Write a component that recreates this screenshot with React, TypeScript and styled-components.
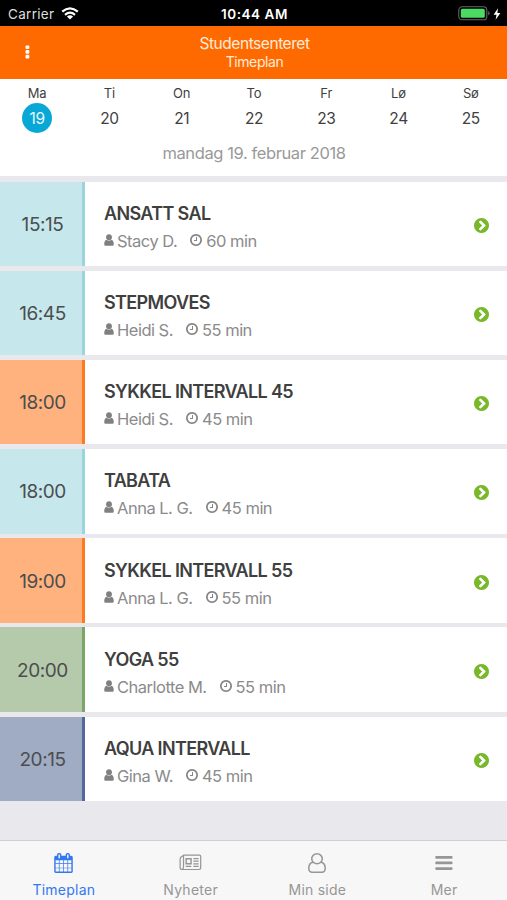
import React from 'react';
import styled, { createGlobalStyle } from 'styled-components';

const GlobalStyle = createGlobalStyle`
  * { box-sizing: border-box; }
  body {
    margin: 0;
    background: #e8e8ed;
    font-family: Inter, "Liberation Sans", sans-serif;
    color: #3f3f3f;
  }
`;

const Screen = styled.div`
  display: flex;
  flex-direction: column;
  width: 507px;
  height: 900px;
  overflow: hidden;
  background: #e8e8ed;
`;

const StatusBar = styled.div`
  display: grid;
  grid-template-columns: 1fr auto 1fr;
  align-items: center;
  flex: none;
  height: 25.5px;
  padding: 2px 6px 0 8px;
  background: #000;
  color: #fff;
`;

const Carrier = styled.div`
  display: flex;
  align-items: center;
  gap: 7px;
  font-size: 13.5px;
  letter-spacing: 0.3px;
  color: #dedede;
`;

const Clock = styled.div`
  font-size: 13.5px;
  font-weight: 600;
  letter-spacing: 0.55px;
`;

const Power = styled.div`
  display: flex;
  justify-content: flex-end;
  align-items: center;
  gap: 3px;
`;

const Header = styled.header`
  display: grid;
  grid-template-columns: 54px 1fr 54px;
  align-items: center;
  flex: none;
  height: 53.5px;
  background: #ff6a00;
  color: #ffeadb;
`;

const MenuButton = styled.button`
  display: flex;
  justify-content: center;
  padding: 0;
  border: 0;
  background: none;
`;

const Titles = styled.div`
  text-align: center;
  padding: 1px 0 0 2px;
`;

const Place = styled.div`
  font-size: 15.5px;
  line-height: 19px;
  letter-spacing: -0.45px;
`;

const Section = styled.div`
  font-size: 14px;
  line-height: 18px;
  letter-spacing: -0.4px;
`;

const Calendar = styled.section`
  flex: none;
  height: 97px;
  background: #fff;
`;

const Week = styled.div`
  display: grid;
  grid-template-columns: repeat(7, 1fr);
  padding: 6px 0 0 1px;
`;

const Day = styled.div`
  display: flex;
  flex-direction: column;
  align-items: center;
`;

const DayName = styled.div`
  font-size: 13px;
  line-height: 17px;
  letter-spacing: -0.1px;
`;

const DayNumber = styled.div<{ $active: boolean }>`
  width: 30px;
  height: 30px;
  margin-top: 1px;
  border-radius: 50%;
  font-size: 15.5px;
  line-height: 31px;
  letter-spacing: -0.4px;
  text-align: center;
  background: ${(p) => (p.$active ? '#07a7d6' : 'transparent')};
  color: ${(p) => (p.$active ? '#e6f8ff' : '#3f3f3f')};
`;

const FullDate = styled.div`
  margin-top: 9px;
  padding-left: 1px;
  text-align: center;
  font-size: 16.5px;
  line-height: 22px;
  letter-spacing: -0.4px;
  color: #999;
`;

const List = styled.main`
  display: flex;
  flex-direction: column;
  flex: 1;
  gap: 4.7px;
  padding-top: 5.5px;
`;

const Row = styled.article`
  display: flex;
  align-items: center;
  flex: none;
  height: 84.5px;
  padding-right: 18px;
  background: #fff;
`;

const Time = styled.div<{ $fill: string; $edge: string }>`
  display: flex;
  align-items: center;
  justify-content: center;
  align-self: stretch;
  width: 85px;
  padding: 1px 0 0 3px;
  border-right: 3px solid ${(p) => p.$edge};
  background: ${(p) => p.$fill};
  font-size: 19px;
  letter-spacing: -0.45px;
  color: #4b4e4f;
`;

const Details = styled.div`
  flex: 1;
  padding: 8px 0 0 19px;
`;

const Name = styled.div`
  font-size: 18px;
  font-weight: 600;
  line-height: 26px;
  letter-spacing: -0.65px;
  white-space: nowrap;
`;

const Meta = styled.div`
  display: flex;
  align-items: center;
  height: 28px;
  font-size: 16.5px;
  letter-spacing: -0.5px;
  color: #8b8b8b;
  white-space: nowrap;

  svg {
    margin-bottom: 2px;
  }
`;

const Trainer = styled.span`
  margin: 0 13px 0 3px;
`;

const Duration = styled.span`
  margin-left: 4px;
`;

const Arrow = styled.div`
  display: flex;
  padding-top: 3px;
`;

const TabBar = styled.nav`
  display: grid;
  grid-template-columns: repeat(4, 1fr);
  flex: none;
  height: 60px;
  border-top: 1px solid #cfcfd3;
  background: #f7f7f7;
`;

const Tab = styled.a<{ $active?: boolean }>`
  display: flex;
  flex-direction: column;
  align-items: center;
  color: ${(p) => (p.$active ? '#3478f0' : '#969696')};
`;

const TabIcon = styled.div`
  display: flex;
  align-items: center;
  height: 23px;
  margin-top: 10px;
`;

const TabLabel = styled.div`
  margin-top: 7px;
  padding-left: 1px;
  font-size: 14px;
  line-height: 18px;
  letter-spacing: 0.25px;
`;

const glyphs = {
  clock: 'M1024 544v448q0 14-9 23t-23 9h-320q-14 0-23-9t-9-23v-64q0-14 9-23t23-9h224v-352q0-14 9-23t23-9h64q14 0 23 9t9 23zm416 352q0-148-73-273t-198-198-273-73-273 73-198 198-73 273 73 273 198 198 273 73 273-73 198-198 73-273zm224 0q0 209-103 385.5t-279.5 279.5-385.5 103-385.5-103-279.5-279.5-103-385.5 103-385.5 279.5-279.5 385.5-103 385.5 103 279.5 279.5 103 385.5z',
  go: 'M845 1395l454-454q19-19 19-45t-19-45l-454-454q-19-19-45-19t-45 19l-102 102q-19 19-19 45t19 45l307 307-307 307q-19 19-19 45t19 45l102 102q19 19 45 19t45-19zm819-499q0 209-103 385.5t-279.5 279.5-385.5 103-385.5-103-279.5-279.5-103-385.5 103-385.5 279.5-279.5 385.5-103 385.5 103 279.5 279.5 103 385.5z',
  calendar:
    'M192 1664h288v-288h-288v288zm352 0h320v-288h-320v288zm-352-352h288v-320h-288v320zm352 0h320v-320h-320v320zm-352-384h288v-288h-288v288zm736 736h320v-288h-320v288zm-384-736h320v-288h-320v288zm768 736h288v-288h-288v288zm-384-352h320v-320h-320v320zm-352-864v-288q0-13-9.5-22.5t-22.5-9.5h-64q-13 0-22.5 9.5t-9.5 22.5v288q0 13 9.5 22.5t22.5 9.5h64q13 0 22.5-9.5t9.5-22.5zm736 864h288v-320h-288v320zm-384-384h320v-288h-320v288zm384 0h288v-288h-288v288zm32-480v-288q0-13-9.5-22.5t-22.5-9.5h-64q-13 0-22.5 9.5t-9.5 22.5v288q0 13 9.5 22.5t22.5 9.5h64q13 0 22.5-9.5t9.5-22.5zm384-64v1280q0 52-38 90t-90 38h-1408q-52 0-90-38t-38-90v-1280q0-52 38-90t90-38h128v-96q0-66 47-113t113-47h64q66 0 113 47t47 113v96h384v-96q0-66 47-113t113-47h64q66 0 113 47t47 113v96h128q52 0 90 38t38 90z',
  profile:
    'M1201 784q47 14 89.5 38t89 73 79.5 115.5 55 172 22 236.5q0 154-100 263.5t-241 109.5h-854q-141 0-241-109.5t-100-263.5q0-131 22-236.5t55-172 79.5-115.5 89-73 89.5-38q-79-125-79-272 0-104 40.5-198.5t109.5-163.5 163.5-109.5 198.5-40.5 198.5 40.5 163.5 109.5 109.5 163.5 40.5 198.5q0 147-79 272zm-433-656q-159 0-271.5 112.5t-112.5 271.5 112.5 271.5 271.5 112.5 271.5-112.5 112.5-271.5-112.5-271.5-271.5-112.5zm427 1536q88 0 150.5-71.5t62.5-173.5q0-239-78.5-377t-225.5-145q-145 127-336 127t-336-127q-147 7-225.5 145t-78.5 377q0 102 62.5 173.5t150.5 71.5h854z',
};

const UserIcon = () => (
  <svg width="10" height="12" viewBox="0 0 10 12" fill="#808080">
    <circle cx="5" cy="3.2" r="2.9" />
    <path d="M2.5 5.7Q5 7.4 7.5 5.7Q9.7 6.4 9.8 10.2Q9.8 11.8 8.4 11.8H1.6Q0.2 11.8 0.2 10.2Q0.3 6.4 2.5 5.7Z" />
  </svg>
);

const ClockIcon = () => (
  <svg width="12" height="12" viewBox="128 128 1536 1536" fill="#868686">
    <path d={glyphs.clock} />
  </svg>
);

const GoIcon = () => (
  <svg width="15" height="15" viewBox="128 128 1536 1536" fill="#78b82a">
    <path d={glyphs.go} />
  </svg>
);

const CalendarIcon = () => (
  <svg width="19" height="20" viewBox="64 0 1664 1792" fill="currentColor">
    <path d={glyphs.calendar} />
  </svg>
);

const NewsIcon = () => (
  <svg width="23" height="17" viewBox="0 0 24 18" fill="none" stroke="currentColor" strokeWidth="1.3">
    <path d="M4.8 1.2H21.4Q22.8 1.2 22.8 2.6V14.4Q22.8 16.4 20.8 16.4H3Q1 16.4 1 14.4V5.2Q1 3.6 2.6 2.8L4.8 1.2Z" />
    <path d="M4.6 1.5V13.5Q4.6 16 3 16.2" />
    <path d="M7.4 5H12.6V10.4H7.4Z" strokeWidth="1.5" />
    <path d="M15 4.8H20.6M15 7.6H20.6M15 10.4H20.6M7 13.2H12.8M15 13.2H20.6" />
  </svg>
);

const ProfileIcon = () => (
  <svg width="18" height="20" viewBox="0 0 1536 1792" preserveAspectRatio="none" fill="currentColor">
    <path d={glyphs.profile} />
  </svg>
);

const MoreIcon = () => (
  <svg width="18" height="16" viewBox="0 0 18 16" fill="currentColor">
    <rect x="0.3" y="1" width="17.2" height="2.7" rx="0.8" />
    <rect x="0.3" y="6.6" width="17.2" height="2.7" rx="0.8" />
    <rect x="0.3" y="12.2" width="17.2" height="2.7" rx="0.8" />
  </svg>
);

const DotsIcon = () => (
  <svg width="5" height="14" viewBox="0 0 5 14" fill="#fff">
    <rect x="0.5" y="0.4" width="3.8" height="3.6" rx="1" />
    <rect x="0.5" y="5.1" width="3.8" height="3.6" rx="1" />
    <rect x="0.5" y="9.8" width="3.8" height="3.6" rx="1" />
  </svg>
);

const WifiIcon = () => (
  <svg width="18" height="13" viewBox="0 0 18 13" fill="none" stroke="#fff" strokeWidth="2.2">
    <path d="M1.2 4.6Q9-2 16.8 4.6" />
    <path d="M4 7.8Q9 3.6 14 7.8" />
    <path d="M9 12.6L5.9 9.5Q9 7.2 12.1 9.5Z" fill="#fff" stroke="none" />
  </svg>
);

const BatteryIcon = () => (
  <svg width="32" height="15" viewBox="0 0 32 15">
    <rect x="0.8" y="0.8" width="28" height="13" rx="3.4" fill="none" stroke="#66666b" strokeWidth="1.1" />
    <rect x="2.8" y="2.8" width="24" height="9" rx="1.6" fill="#4cd964" />
    <path d="M30.2 5V9.6Q31.6 8.8 31.6 7.3T30.2 5Z" fill="#66666b" />
  </svg>
);

const BoltIcon = () => (
  <svg width="8" height="12" viewBox="0 0 8 12" fill="#fff">
    <path d="M5 0.2L0.6 6.8H3.5L2.6 11.8L7.4 4.9H4.4Z" />
  </svg>
);

const days = [
  ['Ma', 19],
  ['Ti', 20],
  ['On', 21],
  ['To', 22],
  ['Fr', 23],
  ['Lø', 24],
  ['Sø', 25],
] as const;

const palette = {
  teal: ['#c6e7eb', '#9bd5dc'],
  orange: ['#ffb27d', '#ff7a1f'],
  green: ['#b5caab', '#7ba669'],
  blue: ['#a0abc4', '#53699b'],
};

const classes: { time: string; name: string; trainer: string; minutes: number; tone: keyof typeof palette }[] = [
  { time: '15:15', name: 'ANSATT SAL', trainer: 'Stacy D.', minutes: 60, tone: 'teal' },
  { time: '16:45', name: 'STEPMOVES', trainer: 'Heidi S.', minutes: 55, tone: 'teal' },
  { time: '18:00', name: 'SYKKEL INTERVALL 45', trainer: 'Heidi S.', minutes: 45, tone: 'orange' },
  { time: '18:00', name: 'TABATA', trainer: 'Anna L. G.', minutes: 45, tone: 'teal' },
  { time: '19:00', name: 'SYKKEL INTERVALL 55', trainer: 'Anna L. G.', minutes: 55, tone: 'orange' },
  { time: '20:00', name: 'YOGA 55', trainer: 'Charlotte M.', minutes: 55, tone: 'green' },
  { time: '20:15', name: 'AQUA INTERVALL', trainer: 'Gina W.', minutes: 45, tone: 'blue' },
];

export default function App() {
  return (
    <>
      <GlobalStyle />
      <Screen>
        <StatusBar>
          <Carrier>
            Carrier <WifiIcon />
          </Carrier>
          <Clock>10:44 AM</Clock>
          <Power>
            <BatteryIcon />
            <BoltIcon />
          </Power>
        </StatusBar>
        <Header>
          <MenuButton aria-label="Meny">
            <DotsIcon />
          </MenuButton>
          <Titles>
            <Place>Studentsenteret</Place>
            <Section>Timeplan</Section>
          </Titles>
        </Header>
        <Calendar>
          <Week>
            {days.map(([name, number]) => (
              <Day key={number}>
                <DayName>{name}</DayName>
                <DayNumber $active={number === 19}>{number}</DayNumber>
              </Day>
            ))}
          </Week>
          <FullDate>mandag 19. februar 2018</FullDate>
        </Calendar>
        <List>
          {classes.map((c) => (
            <Row key={c.time + c.name}>
              <Time $fill={palette[c.tone][0]} $edge={palette[c.tone][1]}>
                {c.time}
              </Time>
              <Details>
                <Name>{c.name}</Name>
                <Meta>
                  <UserIcon />
                  <Trainer>{c.trainer}</Trainer>
                  <ClockIcon />
                  <Duration>{c.minutes} min</Duration>
                </Meta>
              </Details>
              <Arrow>
                <GoIcon />
              </Arrow>
            </Row>
          ))}
        </List>
        <TabBar>
          <Tab $active>
            <TabIcon>
              <CalendarIcon />
            </TabIcon>
            <TabLabel>Timeplan</TabLabel>
          </Tab>
          <Tab>
            <TabIcon>
              <NewsIcon />
            </TabIcon>
            <TabLabel>Nyheter</TabLabel>
          </Tab>
          <Tab>
            <TabIcon>
              <ProfileIcon />
            </TabIcon>
            <TabLabel>Min side</TabLabel>
          </Tab>
          <Tab>
            <TabIcon>
              <MoreIcon />
            </TabIcon>
            <TabLabel>Mer</TabLabel>
          </Tab>
        </TabBar>
      </Screen>
    </>
  );
}
